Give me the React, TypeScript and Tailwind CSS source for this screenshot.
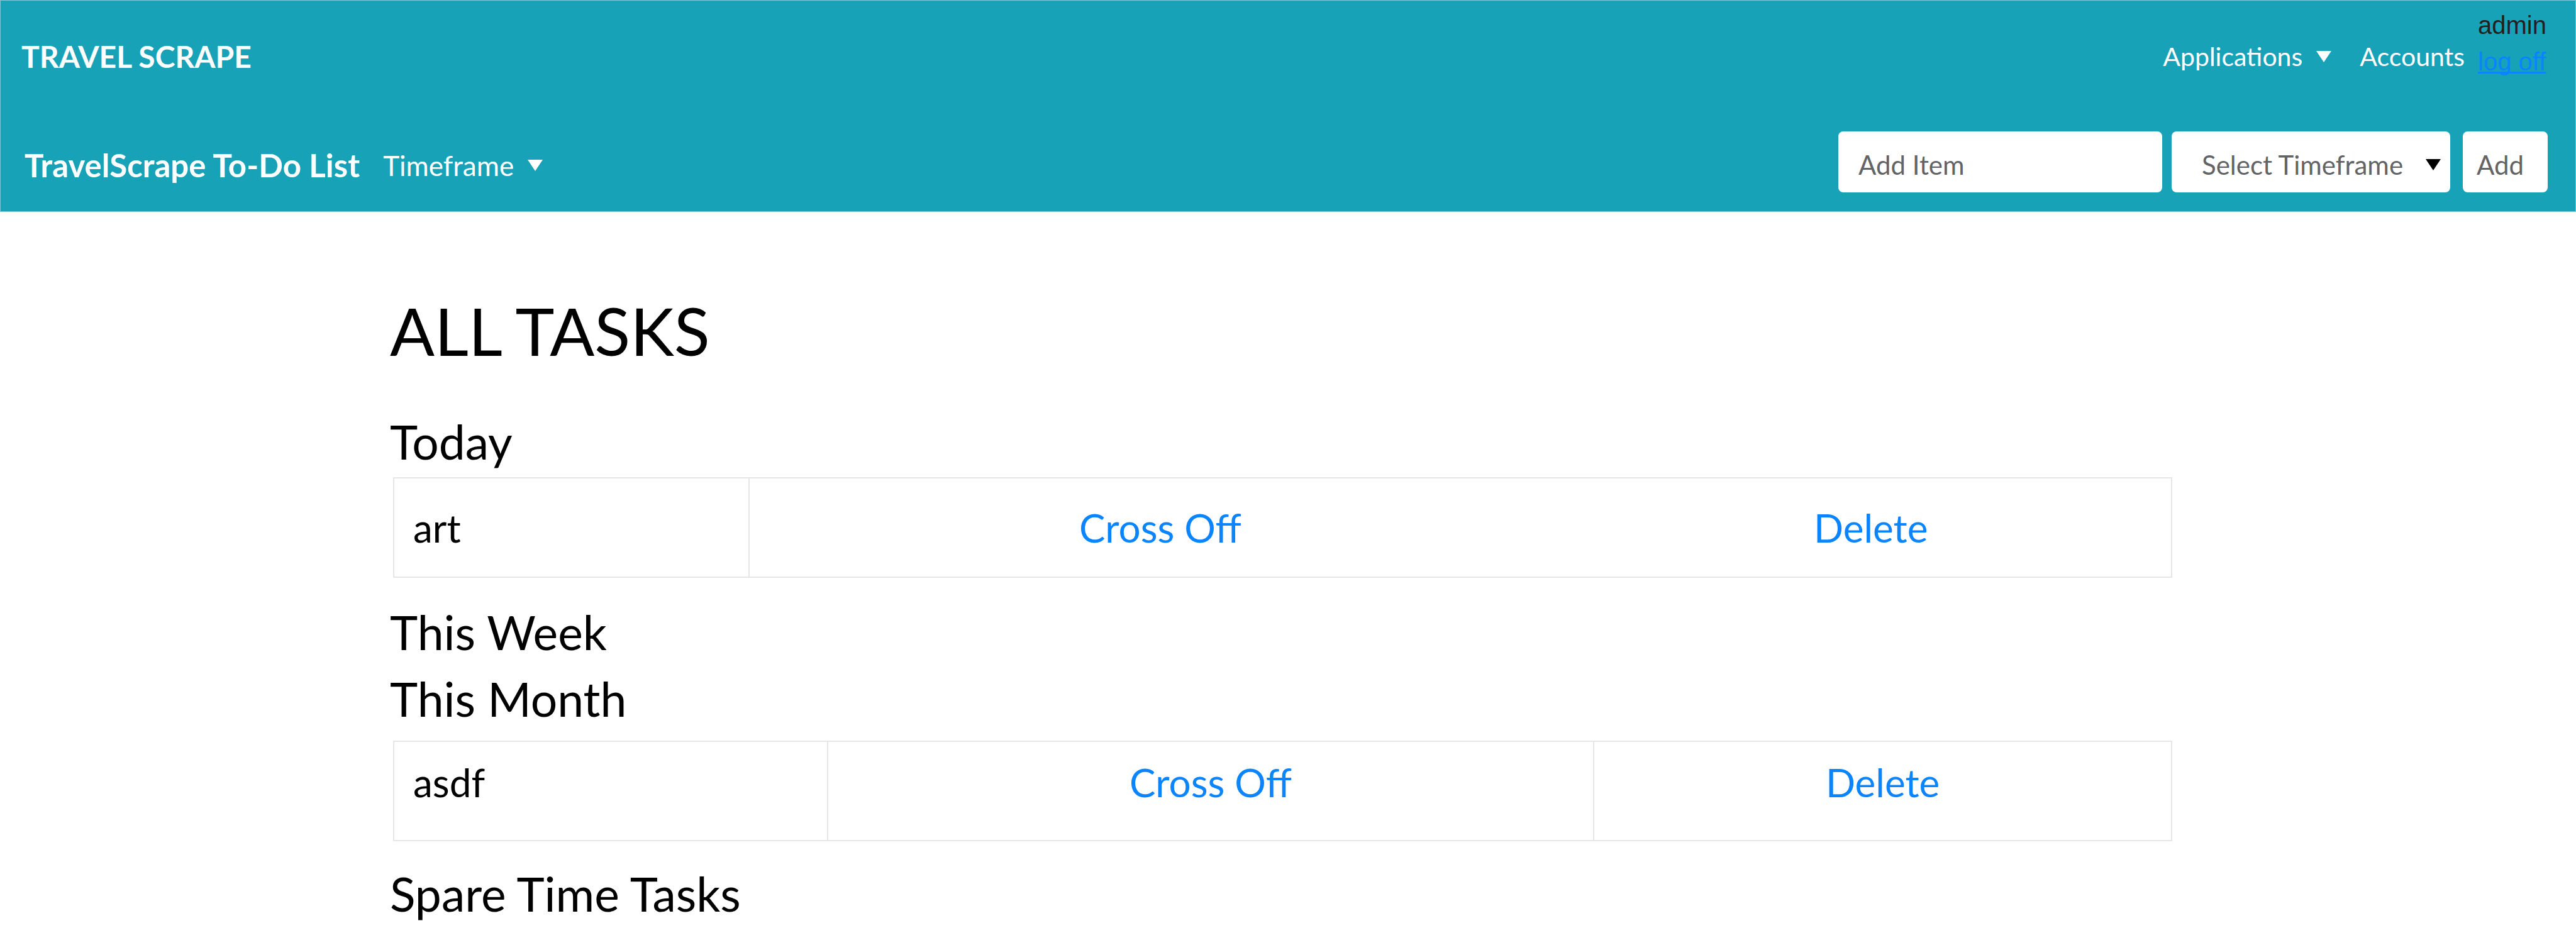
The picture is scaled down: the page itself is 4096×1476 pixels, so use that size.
type Task = { name: string };

function Caret({ className }: { className?: string }) {
  return (
    <svg
      viewBox="0 0 24 18"
      aria-hidden="true"
      className={`h-[18px] w-6 shrink-0 fill-current ${className ?? ""}`}
    >
      <path d="M0 0H24L12 18Z" />
    </svg>
  );
}

function Header() {
  return (
    <header className="border border-[#7dc8d5] bg-[#18a2b8] text-white">
      <div className="flex h-[174px] items-center justify-between pl-[33px] pr-[46px]">
        <a href="#home" className="pt-1 text-[48px] font-bold leading-[60px]">
          TRAVEL SCRAPE
        </a>
        <div className="flex h-full items-center">
          <nav className="flex items-center gap-[45px] pt-1 text-[41px] leading-[50px]">
            <button type="button" className="flex items-center gap-[22px]">
              Applications
              <Caret />
            </button>
            <a href="#accounts">Accounts</a>
          </nav>
          <div className="ml-[21px] flex flex-col self-start pt-[10px] font-['Liberation_Sans',Arial,sans-serif] text-[40px] leading-[58px]">
            <span className="text-[#231f20]">admin</span>
            <a
              href="#logoff"
              className="text-[#0a84ff] underline decoration-[3px] [text-decoration-skip-ink:none]"
            >
              log off
            </a>
          </div>
        </div>
      </div>
      <div className="flex items-center justify-between pb-[30px] pl-[38px] pr-[44px] pt-[34px]">
        <div className="flex items-center pt-[10px]">
          <a href="#todo" className="text-[51px] font-bold leading-[60px]">
            TravelScrape To-Do List
          </a>
          <button
            type="button"
            className="ml-[37px] flex items-center gap-[22px] text-[44px] leading-[50px]"
          >
            Timeframe
            <Caret />
          </button>
        </div>
        <form
          className="flex items-center text-[42px] leading-[50px] text-[#636466]"
          onSubmit={(e) => e.preventDefault()}
        >
          <input
            type="text"
            aria-label="Add Item"
            placeholder="Add Item"
            className="h-[97px] w-[515px] rounded-lg bg-white pl-8 pt-2 placeholder:text-[#636466]"
          />
          <div className="relative ml-[15px]">
            <select
              aria-label="Select Timeframe"
              defaultValue=""
              className="h-[97px] w-[443px] appearance-none rounded-lg bg-white pl-12 pt-2"
            >
              <option value="">Select Timeframe</option>
              <option value="today">Today</option>
              <option value="week">This Week</option>
              <option value="month">This Month</option>
              <option value="spare">Spare Time</option>
            </select>
            <Caret className="pointer-events-none absolute right-[15px] top-[44px] text-black" />
          </div>
          <button
            type="submit"
            className="ml-5 h-[97px] w-[135px] rounded-lg bg-white pl-[22px] pt-2 text-left"
          >
            Add
          </button>
        </form>
      </div>
    </header>
  );
}

const cell = "border-2 border-[#e6e6e7]";

function TodayTable({ tasks }: { tasks: Task[] }) {
  return (
    <table className="mb-[33px] ml-[5px] mt-1 w-full table-fixed border-collapse text-[62px] leading-[76px]">
      <colgroup>
        <col className="w-[20%]" />
        <col className="w-[46.2%]" />
        <col className="w-[33.8%]" />
      </colgroup>
      <tbody>
        {tasks.map((t) => (
          <tr key={t.name} className="h-[158px] border-2 border-[#e6e6e7]">
            <td className={`${cell} pl-[30px]`}>{t.name}</td>
            <td className="text-center text-[#0a84ff]">
              <a href="#cross-off">Cross Off</a>
            </td>
            <td className="text-center text-[#0a84ff]">
              <a href="#delete">Delete</a>
            </td>
          </tr>
        ))}
      </tbody>
    </table>
  );
}

function MonthTable({ tasks }: { tasks: Task[] }) {
  return (
    <table className="mb-[30px] ml-[5px] mt-[14px] w-full table-fixed border-collapse text-[62px] leading-[76px]">
      <colgroup>
        <col className="w-[24.4%]" />
        <col className="w-[43.1%]" />
        <col className="w-[32.5%]" />
      </colgroup>
      <tbody>
        {tasks.map((t) => (
          <tr key={t.name} className="h-[158px] align-top">
            <td className={`${cell} pl-[30px] pt-[26px]`}>{t.name}</td>
            <td className={`${cell} pt-[26px] text-center text-[#0a84ff]`}>
              <a href="#cross-off">Cross Off</a>
            </td>
            <td className={`${cell} pt-[26px] text-center text-[#0a84ff]`}>
              <a href="#delete">Delete</a>
            </td>
          </tr>
        ))}
      </tbody>
    </table>
  );
}

function SectionTitle({ children }: { children: string }) {
  return <h2 className="text-[75px] leading-[106px]">{children}</h2>;
}

export default function App() {
  return (
    <div className="bg-white font-[Lato,sans-serif] text-black">
      <Header />
      <main className="pl-[620px] pr-[647px] pt-[122px]">
        <h1 className="mb-[58px] text-[105px] leading-[132px]">ALL TASKS</h1>
        <SectionTitle>Today</SectionTitle>
        <TodayTable tasks={[{ name: "art" }]} />
        <SectionTitle>This Week</SectionTitle>
        <SectionTitle>This Month</SectionTitle>
        <MonthTable tasks={[{ name: "asdf" }]} />
        <SectionTitle>Spare Time Tasks</SectionTitle>
      </main>
    </div>
  );
}
